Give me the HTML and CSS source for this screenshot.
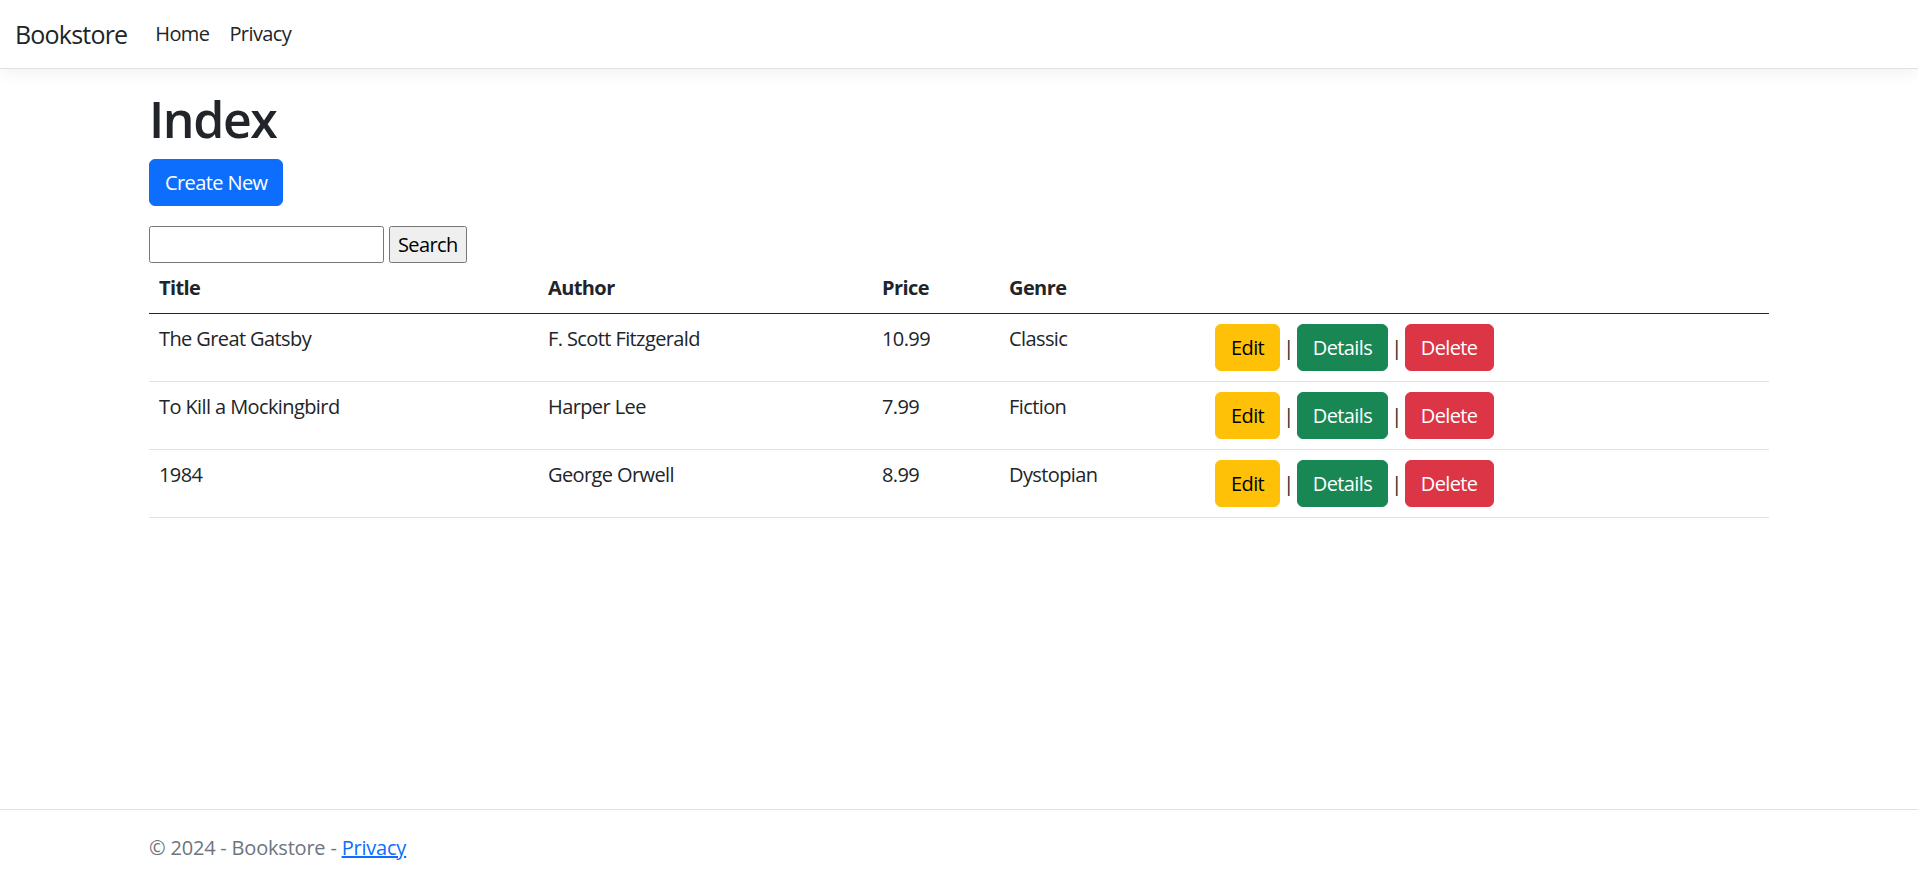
FILE: index.html
```html
<!DOCTYPE html>
<html lang="en">
<head>
<meta charset="utf-8">
<title>Index - Bookstore</title>
<link rel="stylesheet" href="styles.css">
</head>
<body>
<header>
  <nav class="navbar">
    <a class="brand" href="#">Bookstore</a>
    <ul class="nav">
      <li><a class="nav-link" href="#">Home</a></li>
      <li><a class="nav-link" href="#">Privacy</a></li>
    </ul>
  </nav>
</header>
<div class="container page">
  <main class="main">
    <h1 class="title">Index</h1>
    <p class="create"><a class="btn btn-primary" href="#">Create New</a></p>
    <form class="search">
      <input class="search-input" type="text" name="q">
      <button class="search-btn" type="button">Search</button>
    </form>
    <table class="table">
      <colgroup>
        <col class="c-title"><col class="c-author"><col class="c-price"><col class="c-genre"><col>
      </colgroup>
      <thead>
        <tr><th>Title</th><th>Author</th><th>Price</th><th>Genre</th><th></th></tr>
      </thead>
      <tbody>
        <tr>
          <td>The Great Gatsby</td><td>F. Scott Fitzgerald</td><td>10.99</td><td>Classic</td>
          <td class="actions"><a class="btn btn-warning" href="#">Edit</a> | <a class="btn btn-success" href="#">Details</a> | <a class="btn btn-danger" href="#">Delete</a></td>
        </tr>
        <tr>
          <td>To Kill a Mockingbird</td><td>Harper Lee</td><td>7.99</td><td>Fiction</td>
          <td class="actions"><a class="btn btn-warning" href="#">Edit</a> | <a class="btn btn-success" href="#">Details</a> | <a class="btn btn-danger" href="#">Delete</a></td>
        </tr>
        <tr>
          <td>1984</td><td>George Orwell</td><td>8.99</td><td>Dystopian</td>
          <td class="actions"><a class="btn btn-warning" href="#">Edit</a> | <a class="btn btn-success" href="#">Details</a> | <a class="btn btn-danger" href="#">Delete</a></td>
        </tr>
      </tbody>
    </table>
  </main>
</div>
<footer class="footer">
  <div class="container">&copy; 2024 - Bookstore - <a class="footer-link" href="#">Privacy</a></div>
</footer>
</body>
</html>
```
FILE: styles.css
```css
* { box-sizing: border-box; }

html, body { height: 100%; }

body {
  margin: 0;
  min-height: 100vh;
  display: flex;
  flex-direction: column;
  font-family: "Open Sans", "Noto Sans", sans-serif;
  font-size: 20px;
  line-height: 30px;
  letter-spacing: -0.6px;
  color: #212529;
  background: #fff;
}

a { color: #0d6efd; }

/* navbar */
.navbar {
  height: 69px;
  display: flex;
  align-items: center;
  padding: 0 15px;
  background: #fff;
  border-bottom: 1px solid #dee2e6;
  box-shadow: 0 5px 15px rgba(0, 0, 0, 0.05);
  margin-bottom: 20px;
}

.brand {
  font-size: 25px;
  line-height: 37px;
  letter-spacing: -0.8px;
  color: #212529;
  text-decoration: none;
  margin-right: 18px;
}

.nav {
  display: flex;
  list-style: none;
  margin: 0;
  padding: 0;
}

.nav-link {
  display: block;
  padding: 0 10px;
  color: #212529;
  text-decoration: none;
}

/* layout */
.container {
  width: 1650px;
  margin: 0 auto;
  padding: 0 15px;
}

.page { flex: 1; }

.title {
  font-size: 50px;
  line-height: 60px;
  font-weight: 600;
  letter-spacing: -1.4px;
  margin: 0 0 10px;
}

.create { margin: 0 0 20px; }

/* buttons */
.btn {
  display: inline-block;
  padding: 7.5px 15px;
  font-size: 20px;
  line-height: 30px;
  border: 1px solid transparent;
  border-radius: 6px;
  text-decoration: none;
  vertical-align: baseline;
}

.btn-primary { background: #0d6efd; border-color: #0d6efd; color: #fff; }
.btn-warning { background: #ffc107; border-color: #ffc107; color: #000; }
.btn-success { background: #198754; border-color: #198754; color: #fff; }
.btn-danger  { background: #dc3545; border-color: #dc3545; color: #fff; }

/* search */
.search {
  display: flex;
  gap: 5px;
  height: 37px;
}

.search-input {
  width: 235px;
  height: 37px;
  margin: 0;
  padding: 1px 2px;
  border: 1px solid #767676;
  border-radius: 2.5px;
  font: inherit;
  background: #fff;
}

.search-btn {
  height: 37px;
  margin: 0;
  padding: 0 8px;
  border: 1px solid #767676;
  border-radius: 2.5px;
  background: #efefef;
  color: #000;
  font: inherit;
  letter-spacing: inherit;
}

/* table */
.table {
  width: 100%;
  border-collapse: collapse;
  table-layout: fixed;
  vertical-align: top;
}

.c-title  { width: 389px; }
.c-author { width: 334px; }
.c-price  { width: 127px; }
.c-genre  { width: 206px; }

.table th {
  text-align: left;
  font-weight: 700;
  padding: 10px;
  border-bottom: 1px solid #212529;
}

.table td {
  padding: 10px;
  border-bottom: 1px solid #dee2e6;
  vertical-align: top;
}

.table td.actions {
  word-spacing: -1.5px;
}

/* footer */
.footer {
  border-top: 1px solid #dee2e6;
  line-height: 76px;
  color: #6c757d;
  letter-spacing: -0.2px;
  white-space: nowrap;
}

.footer-link { color: #0d6efd; }
```
